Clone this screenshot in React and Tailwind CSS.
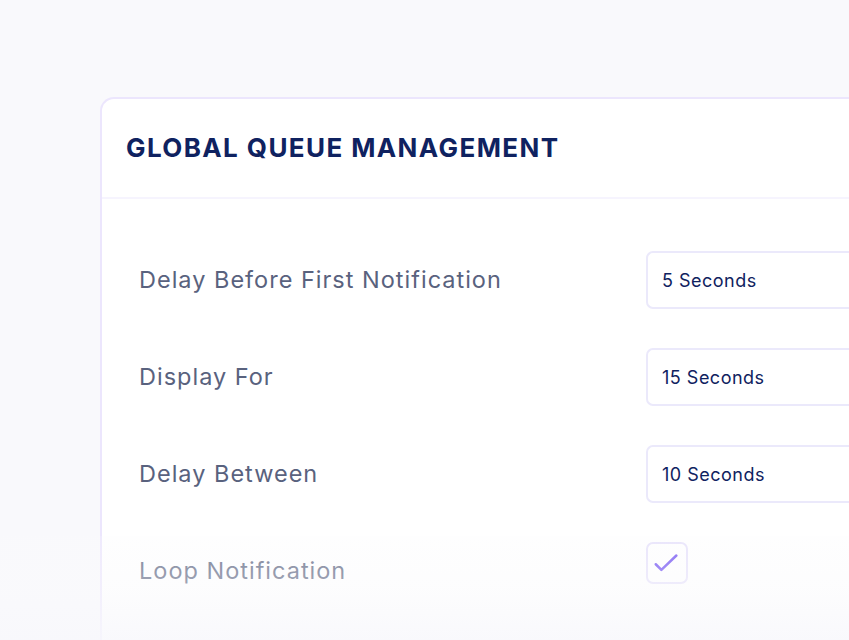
import React from 'react';

const rows = [
  { label: 'Delay Before First Notification', value: '5 Seconds' },
  { label: 'Display For', value: '15 Seconds' },
  { label: 'Delay Between', value: '10 Seconds' },
];

const Field = ({ label, children }) => (
  <div className="flex h-[58px] items-center">
    <div className="w-[507px] text-[23.5px] tracking-[1px] text-[#59627e]">{label}</div>
    {children}
  </div>
);

const App = () => {
  return (
    <div
      className="relative h-[640px] w-[849px] overflow-hidden bg-[#f9f9fc]"
      style={{ fontFamily: 'Inter, "Noto Sans", sans-serif' }}
    >
      <div className="pl-[100px] pt-[97px]">
        <div className="h-[600px] rounded-tl-[14px] border-l-2 border-t-2 border-[#ece6fd] bg-white">
          <div className="flex h-[100px] items-center border-b-2 border-[#f6f4fe] pl-[24px] pb-[2px]">
            <h1 className="text-[26px] font-bold tracking-[1.4px] text-[#0f2260]">
              GLOBAL QUEUE MANAGEMENT
            </h1>
          </div>
          <div className="flex flex-col gap-[39px] pl-[37px] pt-[52px]">
            {rows.map((r) => (
              <Field key={r.label} label={r.label}>
                <div className="flex h-[58px] flex-1 items-center rounded-l-[7px] border-y-2 border-l-2 border-[#ebe9fb] pl-[14px] text-[18px] tracking-[0.5px] text-[#0f2260]">
                  {r.value}
                </div>
              </Field>
            ))}
            <Field label="Loop Notification">
              <div className="flex h-[42px] w-[42px] self-start items-center justify-center rounded-[7px] border-2 border-[#e6e1fb]">
                <svg width="30" height="30" viewBox="0 0 24 24" fill="none">
                  <path
                    d="M3 13 L7.5 17.5 L19.5 6"
                    stroke="#6d4cf2"
                    strokeWidth="2"
                    strokeLinecap="round"
                    strokeLinejoin="round"
                  />
                </svg>
              </div>
            </Field>
          </div>
        </div>
      </div>
      <div className="absolute inset-x-0 bottom-0 top-[536px] bg-gradient-to-b from-[#fafafc]/20 via-[#fafafc]/45 to-[#f8f8fc]/85" />
    </div>
  );
};

export default App;
